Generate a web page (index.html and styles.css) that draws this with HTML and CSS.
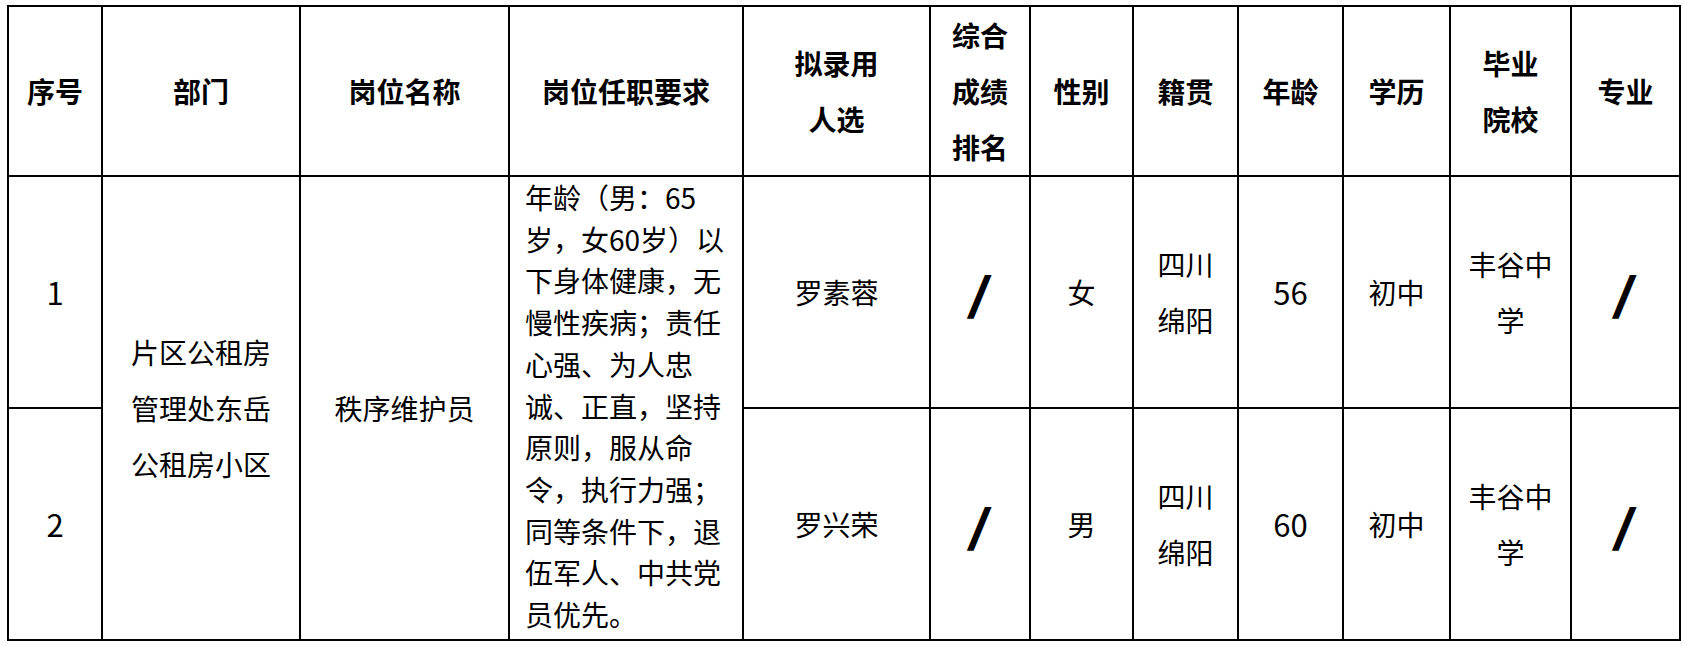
FILE: index.html
```html
<!DOCTYPE html>
<html lang="zh-CN">
<head>
<meta charset="utf-8">
<title>拟录用人选公示</title>
<link rel="stylesheet" href="styles.css">
</head>
<body>
<table class="grid">
  <colgroup>
    <col class="c1"><col class="c2"><col class="c3"><col class="c4">
    <col class="c5"><col class="c6"><col class="c7"><col class="c8">
    <col class="c9"><col class="c10"><col class="c11"><col class="c12">
  </colgroup>
  <thead>
    <tr class="head">
      <th>序号</th>
      <th>部门</th>
      <th>岗位名称</th>
      <th>岗位任职要求</th>
      <th>拟录用<br>人选</th>
      <th>综合<br>成绩<br>排名</th>
      <th>性别</th>
      <th>籍贯</th>
      <th>年龄</th>
      <th>学历</th>
      <th>毕业<br>院校</th>
      <th>专业</th>
    </tr>
  </thead>
  <tbody>
    <tr class="row">
      <td class="num">1</td>
      <td rowspan="2">片区公租房<br>管理处东岳<br>公租房小区</td>
      <td rowspan="2">秩序维护员</td>
      <td rowspan="2" class="desc">年龄（男：65<br>岁，女60岁）以<br>下身体健康，无<br>慢性疾病；责任<br>心强、为人忠<br>诚、正直，坚持<br>原则，服从命<br>令，执行力强；<br>同等条件下，退<br>伍军人、中共党<br>员优先。</td>
      <td>罗素蓉</td>
      <td class="na"><span class="slash">/</span></td>
      <td>女</td>
      <td>四川<br>绵阳</td>
      <td class="num">56</td>
      <td>初中</td>
      <td>丰谷中<br>学</td>
      <td class="na"><span class="slash">/</span></td>
    </tr>
    <tr class="row">
      <td class="num">2</td>
      <td>罗兴荣</td>
      <td class="na"><span class="slash">/</span></td>
      <td>男</td>
      <td>四川<br>绵阳</td>
      <td class="num">60</td>
      <td>初中</td>
      <td>丰谷中<br>学</td>
      <td class="na"><span class="slash">/</span></td>
    </tr>
  </tbody>
</table>
</body>
</html>
```

FILE: styles.css
```css
html, body {
  margin: 0;
  padding: 0;
  background: #ffffff;
}

body {
  padding: 5px 0 0 7px;
  font-family: "Noto Sans CJK SC", "Noto Sans", sans-serif;
  color: #000000;
}

.grid {
  border-collapse: collapse;
  table-layout: fixed;
  width: 1674px;
}

.c1 { width: 94px; }
.c2 { width: 198px; }
.c3 { width: 209px; }
.c4 { width: 234px; }
.c5 { width: 187px; }
.c6 { width: 100px; }
.c7 { width: 103px; }
.c8 { width: 105px; }
.c9 { width: 105px; }
.c10 { width: 107px; }
.c11 { width: 121px; }
.c12 { width: 109px; }

.grid th,
.grid td {
  border: 2px solid #000000;
  padding: 0;
  text-align: center;
  vertical-align: middle;
  font-size: 28px;
  line-height: 56px;
  white-space: nowrap;
}

.grid th {
  font-weight: 700;
}

.grid td {
  font-weight: 400;
}

.head {
  height: 168px;
}

.row {
  height: 232px;
}

.grid td.num {
  font-size: 31px;
}

.grid td.desc {
  text-align: left;
  vertical-align: top;
  padding-left: 15px;
  line-height: 41.7px;
}

.grid td.na {
  font-size: 42px;
  font-weight: 700;
  line-height: 56px;
}

.slash {
  display: inline-block;
  transform: skewX(-9deg);
  -webkit-text-stroke: 2.5px #000000;
}
```
